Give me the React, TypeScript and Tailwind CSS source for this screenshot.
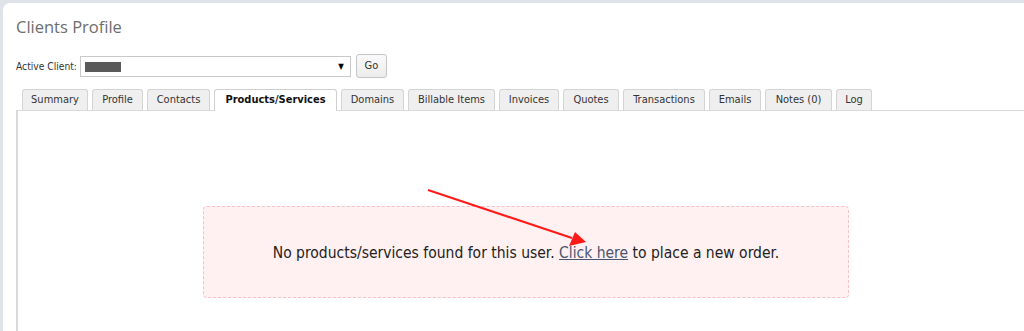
const tabs = [
  { label: 'Summary', w: 'w-[66px]' },
  { label: 'Profile', w: 'w-[51px]' },
  { label: 'Contacts', w: 'w-[63px]' },
  { label: 'Products/Services', w: 'w-[123px]', active: true },
  { label: 'Domains', w: 'w-[63px]' },
  { label: 'Billable Items', w: 'w-[87px]' },
  { label: 'Invoices', w: 'w-[60px]' },
  { label: 'Quotes', w: 'w-[56px]' },
  { label: 'Transactions', w: 'w-[82px]' },
  { label: 'Emails', w: 'w-[52px]' },
  { label: 'Notes (0)', w: 'w-[67px]' },
  { label: 'Log', w: 'w-[36px]' },
]

export default function App() {
  return (
    <div className="h-[331px] overflow-hidden bg-[#dfe4ea] pl-[3px] pt-[3px] font-['DejaVu_Sans_Condensed','DejaVu_Sans',sans-serif]">
      <div className="relative flex h-full flex-col rounded-tl-[7px] bg-white pl-[13px]">
        <h1 className="pt-[11px] font-['Open_Sans',sans-serif] text-[16.5px] leading-[26px] text-[#6d6d6d]">
          Clients Profile
        </h1>

        {/* client picker */}
        <div className="mt-[15px] flex items-center">
          <span className="text-[10.2px] text-[#333]">Active Client:</span>
          <div className="ml-[3px] flex h-[21px] w-[271px] items-center justify-between border border-[#c9c9c9] bg-white pl-[4px] pr-[6px]">
            <span className="h-[10px] w-[36px] bg-[#5a5a5a]" />
            <span className="text-[8px] text-black">▼</span>
          </div>
          <button className="-mt-px ml-[5px] h-[24px] w-[31px] rounded-[3px] border border-[#c6c6c6] bg-gradient-to-b from-[#fafafa] to-[#ececec] text-[11px] text-[#333]">
            Go
          </button>
        </div>

        {/* tabs */}
        <div className="mt-[11px] flex gap-[4px] pl-[6px]">
          {tabs.map((t) => (
            <div
              key={t.label}
              className={
                t.active
                  ? `${t.w} relative z-10 -mb-px flex h-[22px] items-center justify-center rounded-t-[3px] border border-b-0 border-[#cfcfcf] bg-white text-[11px] font-bold text-[#111]`
                  : `${t.w} flex h-[21px] items-center justify-center rounded-t-[3px] border border-b-0 border-[#d4d4d4] bg-[#efefef] text-[11px] text-[#333]`
              }
            >
              {t.label}
            </div>
          ))}
        </div>

        {/* tab content */}
        <div className="flex-1 border-l-2 border-t border-[#dadada] pl-[185px] pt-[95px]">
          <div className="flex h-[92px] w-[646px] items-center justify-center rounded-[4px] border border-dashed border-[#f7c2c5] bg-[#fff1f1] pt-[3px] text-[15.5px] text-[#222]">
            <span>
              No products/services found for this user.{' '}
              <a className="text-[#4a5670] underline">Click here</a> to place a new order.
            </span>
          </div>
        </div>

        {/* annotation arrow */}
        <svg className="absolute left-0 top-0" width="1021" height="328" viewBox="3 3 1021 328">
          <line x1="428" y1="190" x2="572" y2="238" stroke="#ff1a1a" strokeWidth="2" />
          <polygon points="586,242 569,246 575,232" fill="#ff1a1a" />
        </svg>
      </div>
    </div>
  )
}
